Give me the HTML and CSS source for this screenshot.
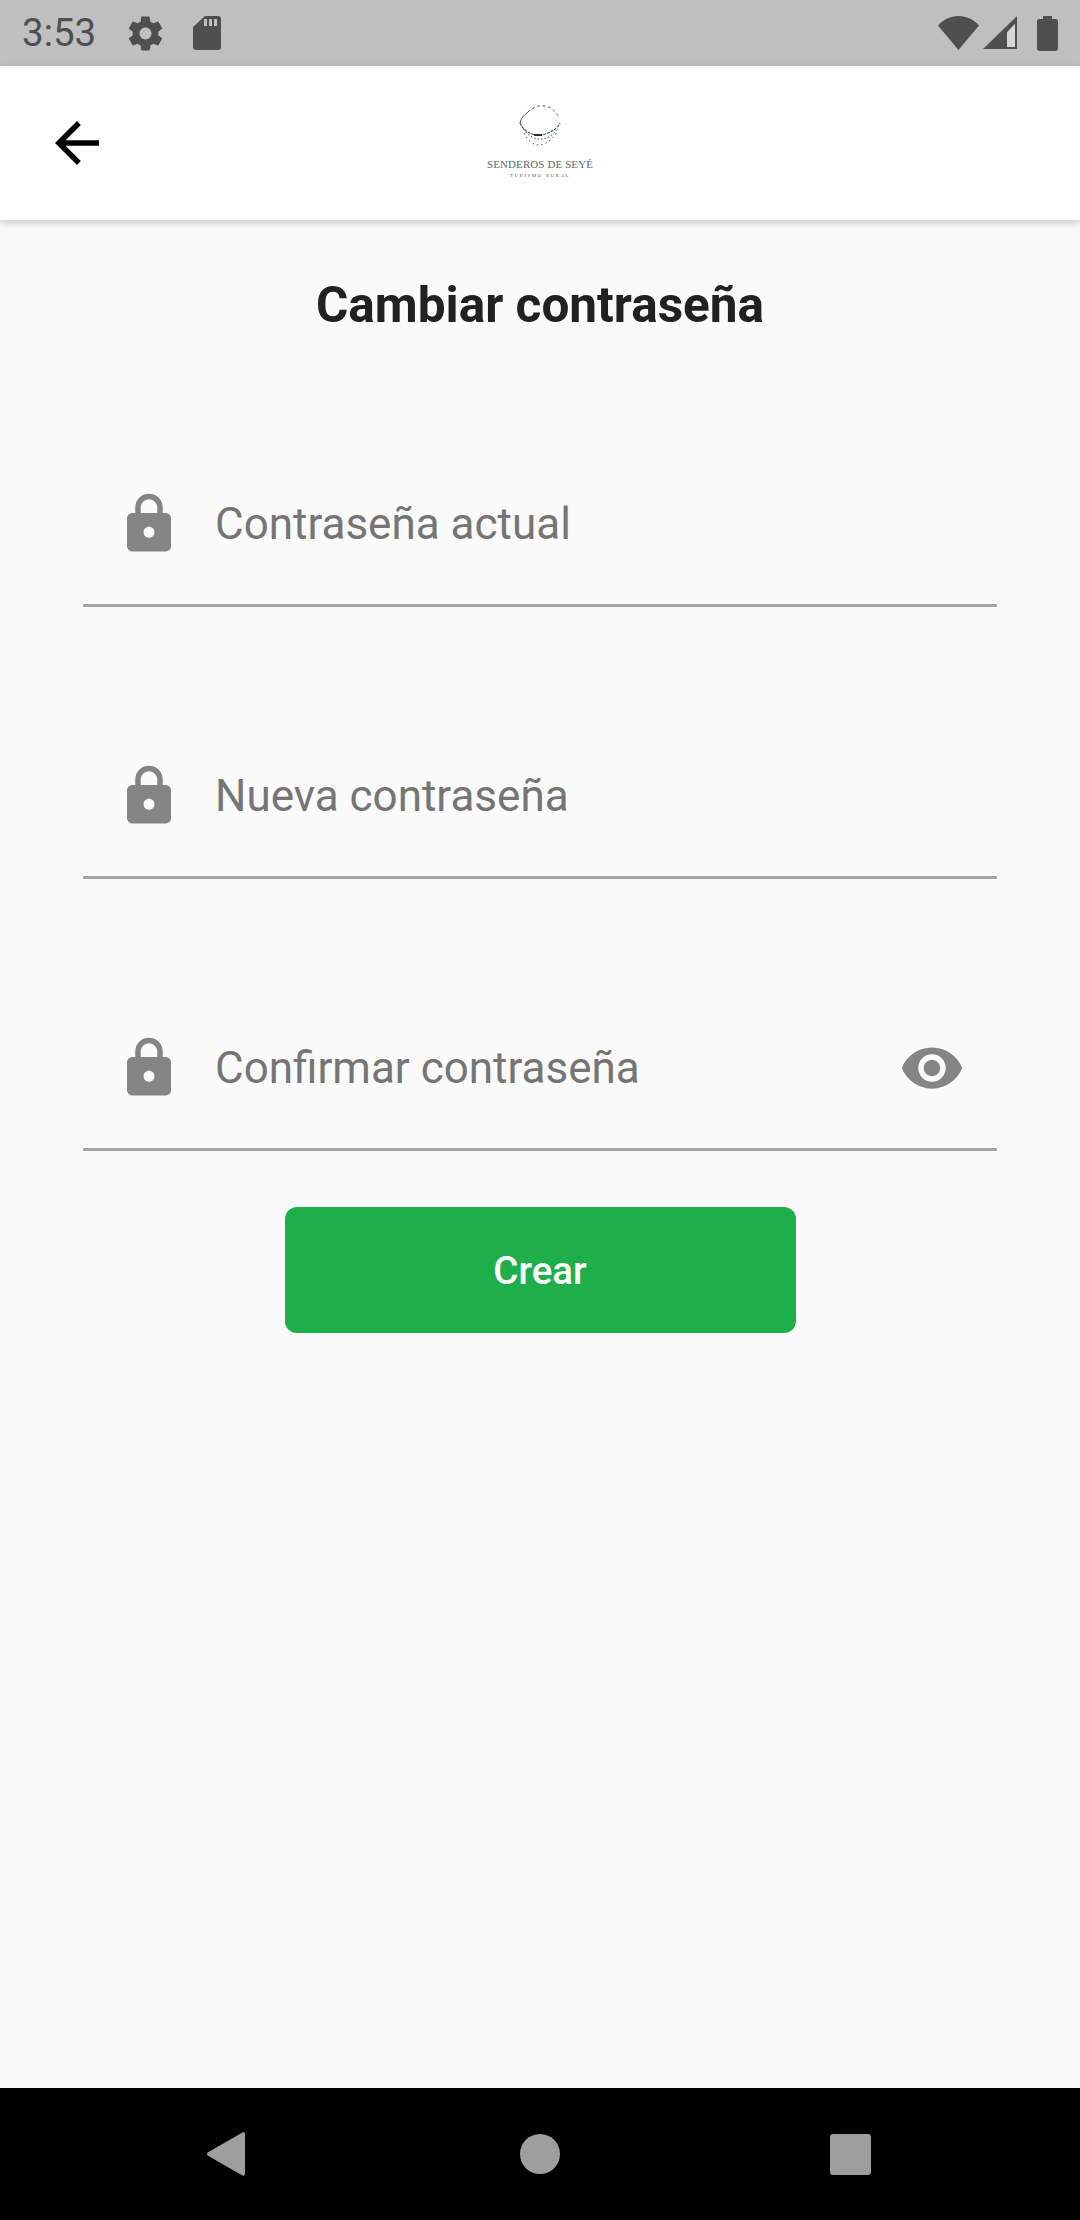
FILE: index.html
```html
<!DOCTYPE html>
<html lang="es">
<head>
    <meta charset="UTF-8">
    <meta name="viewport" content="width=device-width, initial-scale=1.0">
    <title>Cambiar contraseña</title>
    <link rel="stylesheet" href="styles.css">
</head>
<body>
    <div class="status-bar">
        <span class="time">3:53</span>
        <svg class="icon-gear" viewBox="0 0 24 24"><path d="M19.43 12.98c.04-.32.07-.64.07-.98s-.03-.66-.07-.98l2.11-1.65c.19-.15.24-.42.12-.64l-2-3.46c-.12-.22-.39-.3-.61-.22l-2.49 1c-.52-.4-1.08-.73-1.69-.98l-.38-2.65C14.46 2.18 14.25 2 14 2h-4c-.25 0-.46.18-.49.42l-.38 2.65c-.61.25-1.17.59-1.69.98l-2.49-1c-.23-.09-.49 0-.61.22l-2 3.46c-.13.22-.07.49.12.64l2.11 1.65c-.04.32-.07.65-.07.98s.03.66.07.98l-2.11 1.65c-.19.15-.24.42-.12.64l2 3.46c.12.22.39.3.61.22l2.49-1c.52.4 1.08.73 1.69.98l.38 2.65c.03.24.24.42.49.42h4c.25 0 .46-.18.49-.42l.38-2.65c.61-.25 1.17-.59 1.69-.98l2.49 1c.23.09.49 0 .61-.22l2-3.46c.12-.22.07-.49-.12-.64l-2.11-1.65zM12 15.5c-1.93 0-3.5-1.57-3.5-3.5s1.57-3.5 3.5-3.5 3.5 1.57 3.5 3.5-1.57 3.5-3.5 3.5z"/></svg>
        <svg class="icon-sd" viewBox="0 0 28 34"><path fill-rule="evenodd" d="M12 0h13c1.7 0 3 1.300 3 3v28c0 1.700-1.300 3-3 3H3c-1.700 0-3-1.300-3-3V11zM11 3v7h3V3zM16 3v7h3V3zM21 3v7h3V3z"/></svg>
        <div class="status-right">
            <svg class="icon-wifi" viewBox="0 0 41 34"><path d="M0 9.500C5.500 3.500 12.500 0 20.500 0S35.500 3.500 41 9.500L20.500 34z"/></svg>
            <svg class="icon-signal" viewBox="0 0 34 34"><path fill-rule="evenodd" d="M34 0v33H0zM32 8l-8 8.500V31h8z"/><path class="signal-empty" d="M32 8l-8 8.500V31h8z"/></svg>
            <svg class="icon-battery" viewBox="0 0 21 35"><path d="M6 0h9v3h3.500c1.400 0 2.500 1.100 2.500 2.500v27c0 1.400-1.100 2.500-2.500 2.500h-16C1.100 35 0 33.900 0 32.500v-27C0 4.100 1.100 3 2.500 3H6z"/></svg>
        </div>
    </div>

    <header class="app-bar">
        <svg class="icon-back" viewBox="0 0 24 24"><path d="M20 11H7.830l5.590-5.590L12 4l-8 8 8 8 1.410-1.410L7.830 13H20v-2z"/></svg>
        <div class="logo">
            <svg class="logo-ring" viewBox="0 0 42 42" fill="none" stroke="#4a5853">
                <path d="M9 7C14 2 20 0 26 1s11 5 14 12" stroke-width="1" stroke-dasharray="2.500 3"/>
                <path d="M1 18C2 13 5 10 9 7" stroke-width="1"/>
                <path d="M1 18c3 7 10 12 18 12s18-4 22-12" stroke-width="1.200" stroke-dasharray="3 1"/>
                <path d="M3 21c3 7 9 12 16 13s15-3 20-11" stroke-width="1" stroke-dasharray="1.500 2"/>
                <path d="M5 28c4 8 9 12 15 12s13-5 18-13" stroke-width="1" stroke-dasharray="1.500 3"/>
                <path d="M15 30h8" stroke="#222" stroke-width="1.800"/>
            </svg>
            <span class="logo-name">SENDEROS DE SEYÉ</span>
            <span class="logo-sub">TURISMO RURAL</span>
        </div>
    </header>

    <main class="content">
        <h1 class="title">Cambiar contraseña</h1>
        <form class="form">
            <div class="field">
                <svg class="icon-lock" viewBox="0 0 24 24"><path d="M18 8h-1V6c0-2.760-2.240-5-5-5S7 3.240 7 6v2H6c-1.100 0-2 .9-2 2v10c0 1.100.9 2 2 2h12c1.100 0 2-.9 2-2V10c0-1.100-.9-2-2-2zm-6 9c-1.100 0-2-.9-2-2s.9-2 2-2 2 .9 2 2-.9 2-2 2zM9 8V6c0-1.660 1.340-3 3-3s3 1.340 3 3v2H9z"/></svg>
                <span class="placeholder">Contraseña actual</span>
            </div>
            <div class="field">
                <svg class="icon-lock" viewBox="0 0 24 24"><path d="M18 8h-1V6c0-2.760-2.240-5-5-5S7 3.240 7 6v2H6c-1.100 0-2 .9-2 2v10c0 1.100.9 2 2 2h12c1.100 0 2-.9 2-2V10c0-1.100-.9-2-2-2zm-6 9c-1.100 0-2-.9-2-2s.9-2 2-2 2 .9 2 2-.9 2-2 2zM9 8V6c0-1.660 1.340-3 3-3s3 1.340 3 3v2H9z"/></svg>
                <span class="placeholder">Nueva contraseña</span>
            </div>
            <div class="field">
                <svg class="icon-lock" viewBox="0 0 24 24"><path d="M18 8h-1V6c0-2.760-2.240-5-5-5S7 3.240 7 6v2H6c-1.100 0-2 .9-2 2v10c0 1.100.9 2 2 2h12c1.100 0 2-.9 2-2V10c0-1.100-.9-2-2-2zm-6 9c-1.100 0-2-.9-2-2s.9-2 2-2 2 .9 2 2-.9 2-2 2zM9 8V6c0-1.660 1.340-3 3-3s3 1.340 3 3v2H9z"/></svg>
                <span class="placeholder">Confirmar contraseña</span>
                <svg class="icon-eye" viewBox="0 0 24 24"><path d="M12 4.500C7 4.500 2.730 7.610 1 12c1.730 4.390 6 7.500 11 7.500s9.270-3.110 11-7.500c-1.730-4.390-6-7.500-11-7.500zM12 17c-2.760 0-5-2.240-5-5s2.240-5 5-5 5 2.240 5 5-2.240 5-5 5zm0-8c-1.660 0-3 1.340-3 3s1.340 3 3 3 3-1.340 3-3-1.340-3-3-3z"/></svg>
            </div>
            <button type="button" class="btn-create">Crear</button>
        </form>
    </main>

    <nav class="nav-bar">
        <svg class="nav-back" viewBox="0 0 38 44"><path d="M35 .8c1.300-1 3-.3 3 1.400v39.600c0 1.700-1.700 2.400-3 1.400L1 23.800c-1.300-1-1.300-2.600 0-3.600z"/></svg>
        <span class="nav-home"></span>
        <span class="nav-recent"></span>
    </nav>
</body>
</html>
```

FILE: styles.css
```css
* {
    box-sizing: border-box;
}
body {
    margin: 0;
    width: 1080px;
    height: 2220px;
    display: flex;
    flex-direction: column;
    font-family: Roboto, Arial, sans-serif;
    background-color: #fafafa;
    overflow: hidden;
}
svg {
    display: block;
    flex-shrink: 0;
}

/* status bar */
.status-bar {
    height: 66px;
    background-color: #bfbfbf;
    display: flex;
    align-items: center;
    padding: 0 22px;
    color: #4f4f4f;
    fill: #4f4f4f;
}
.time {
    font-size: 38.5px;
    width: 72px;
    line-height: 66px;
}
.icon-gear {
    width: 41px;
    height: 41px;
    margin-left: 31px;
}
.icon-sd {
    width: 28px;
    height: 34px;
    margin-left: 27px;
}
.status-right {
    margin-left: auto;
    display: flex;
    align-items: center;
}
.icon-wifi {
    width: 41px;
    height: 34px;
}
.icon-signal {
    width: 34px;
    height: 34px;
    margin-left: 4px;
}
.signal-empty {
    fill: #d6d6d6;
}
.icon-battery {
    width: 21px;
    height: 35px;
    margin-left: 20px;
}

/* app bar */
.app-bar {
    height: 154px;
    background-color: #fff;
    display: flex;
    align-items: center;
    position: relative;
    padding-left: 44px;
    box-shadow: 0 3px 8px rgba(0, 0, 0, 0.2);
}
.icon-back {
    width: 66px;
    height: 66px;
    fill: #000;
}
.logo {
    position: absolute;
    left: 470px;
    top: 39px;
    width: 140px;
    display: flex;
    flex-direction: column;
    align-items: center;
}
.logo-ring {
    width: 42px;
    height: 42px;
}
.logo-name {
    font-family: "Liberation Serif", serif;
    font-size: 11px;
    letter-spacing: 0.1px;
    line-height: 12px;
    margin-top: 11px;
    color: #5a6a64;
    white-space: nowrap;
}
.logo-sub {
    font-family: "Liberation Serif", serif;
    font-size: 5px;
    letter-spacing: 1.5px;
    line-height: 8px;
    margin-top: 2px;
    color: #5a6a64;
    white-space: nowrap;
}

/* form */
.content {
    flex: 1;
}
.title {
    margin: 0;
    padding-top: 58px;
    font-size: 49.5px;
    line-height: 54px;
    font-weight: 700;
    text-align: center;
    color: #212121;
}
.form {
    padding: 0 83px;
    display: flex;
    flex-direction: column;
}
.field {
    height: 272px;
    border-bottom: 3px solid #a6a6a6;
    display: flex;
    align-items: flex-end;
    padding: 0 32px 47px 33px;
    color: #757575;
    fill: #858585;
}
.form .field:first-child {
    height: 275px;
}
.icon-lock {
    width: 66px;
    height: 66px;
}
.placeholder {
    font-size: 44px;
    line-height: 66px;
    margin-left: 33px;
}
.icon-eye {
    width: 66px;
    height: 66px;
    margin-left: auto;
}
.btn-create {
    align-self: center;
    width: 511px;
    height: 126px;
    margin-top: 56px;
    border: none;
    border-radius: 12px;
    background-color: #1eaf4b;
    color: #fff;
    font-family: Roboto, Arial, sans-serif;
    font-size: 38.5px;
    font-weight: 500;
}

/* navigation bar */
.nav-bar {
    height: 132px;
    background-color: #000;
    display: flex;
    align-items: center;
    padding-left: 207px;
}
.nav-back {
    width: 38px;
    height: 44px;
    fill: #9e9e9e;
}
.nav-home {
    width: 40px;
    height: 40px;
    border-radius: 50%;
    background-color: #9e9e9e;
    margin-left: 275px;
}
.nav-recent {
    width: 41px;
    height: 41px;
    border-radius: 3px;
    background-color: #9e9e9e;
    margin-left: 270px;
}
```
